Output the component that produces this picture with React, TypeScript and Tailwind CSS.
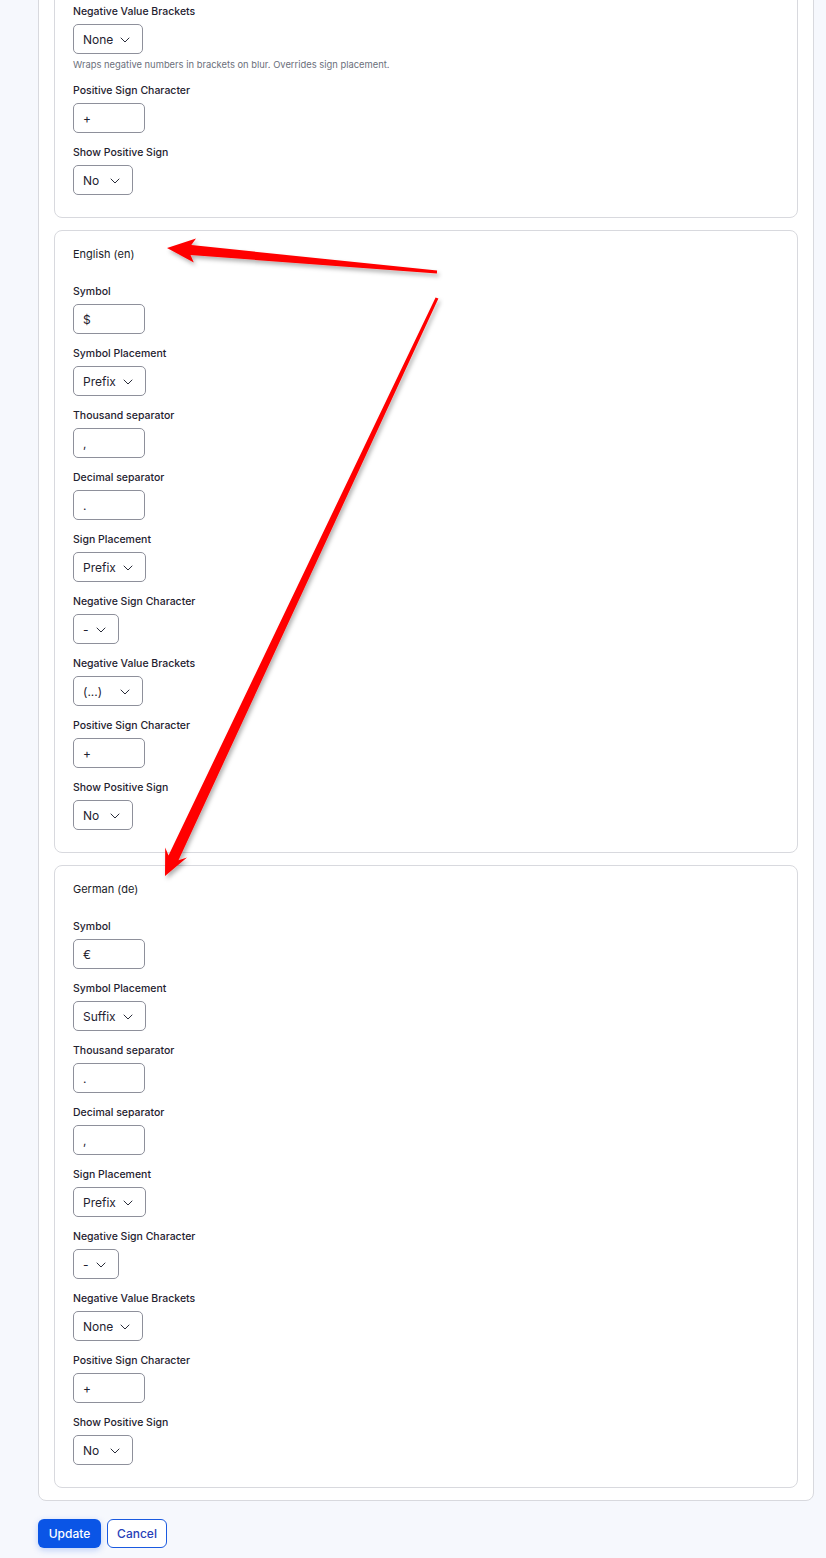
import React from 'react';

type Field =
  | { label: string; kind: 'input'; value: string; help?: string }
  | { label: string; kind: 'select'; value: string; width: string; help?: string };

const localeFields = (f: {
  symbol: string;
  placement: string;
  thousand: string;
  decimal: string;
  brackets: string;
  bracketsWidth: string;
}): Field[] => [
  { label: 'Symbol', kind: 'input', value: f.symbol },
  { label: 'Symbol Placement', kind: 'select', value: f.placement, width: 'w-[73px]' },
  { label: 'Thousand separator', kind: 'input', value: f.thousand },
  { label: 'Decimal separator', kind: 'input', value: f.decimal },
  { label: 'Sign Placement', kind: 'select', value: 'Prefix', width: 'w-[73px]' },
  { label: 'Negative Sign Character', kind: 'select', value: '-', width: 'w-[46px]' },
  { label: 'Negative Value Brackets', kind: 'select', value: f.brackets, width: f.bracketsWidth },
  { label: 'Positive Sign Character', kind: 'input', value: '+' },
  { label: 'Show Positive Sign', kind: 'select', value: 'No', width: 'w-[60px]' },
];

const defaultTail: Field[] = [
  {
    label: 'Negative Value Brackets',
    kind: 'select',
    value: 'None',
    width: 'w-[70px]',
    help: 'Wraps negative numbers in brackets on blur. Overrides sign placement.',
  },
  { label: 'Positive Sign Character', kind: 'input', value: '+' },
  { label: 'Show Positive Sign', kind: 'select', value: 'No', width: 'w-[60px]' },
];

const Chevron = () => (
  <svg width="10" height="6" viewBox="0 0 10 6" fill="none" className="shrink-0">
    <path d="M1 1l4 4 4-4" stroke="#2a2d3a" strokeWidth="1" strokeLinecap="round" strokeLinejoin="round" />
  </svg>
);

const FieldRow = ({ field }: { field: Field }) => (
  <div className="flex flex-col">
    <label className="pt-px text-[10.5px] leading-[14px] font-medium text-[#1f2230]">{field.label}</label>
    {field.kind === 'input' ? (
      <div className="mt-[5px] h-[30px] w-[72px] rounded-[5px] border border-[#8e909b] bg-white pl-[9px] pt-px flex items-center text-[12px] text-[#1f2230]">
        {field.value}
      </div>
    ) : (
      <div
        className={`mt-[5px] h-[30px] ${field.width} rounded-[5px] border border-[#8e909b] bg-white pl-[9px] pr-[12px] pt-px flex items-center justify-between text-[12px] text-[#1f2230]`}
      >
        <span>{field.value}</span>
        <Chevron />
      </div>
    )}
    {field.help && <p className="mt-[5px] text-[9.4px] leading-[12px] text-[#6b6f7b]">{field.help}</p>}
  </div>
);

const Card = ({ title, fields }: { title?: string; fields: Field[] }) => (
  <div className="rounded-[8px] border border-[#d8d9de] bg-white px-[18px] pt-4 pb-[22px]">
    {title && <div className="mb-[23px] text-[11px] leading-[14px] text-[#1a1c28]">{title}</div>}
    <div className="flex flex-col gap-3">
      {fields.map((f, i) => (
        <FieldRow key={i} field={f} />
      ))}
    </div>
  </div>
);

const Arrows = () => (
  <svg className="absolute top-0 left-0 pointer-events-none" width="826" height="1558" viewBox="0 0 826 1558">
    <defs>
      <filter id="shadow" x="-20%" y="-20%" width="140%" height="140%">
        <feDropShadow dx="2" dy="3" stdDeviation="2" floodColor="#000" floodOpacity="0.3" />
      </filter>
    </defs>
    <g fill="#ff0000" filter="url(#shadow)">
      <polygon points="167,248 196,238.5 191.3,245.1 437.1,270.5 436.9,273.5 190.5,255.1 193.8,262.4" />
      <polygon points="165,876 187,857.6 178.5,860.2 438.4,298.6 435.6,297.4 168.5,855.6 165.2,847.4" />
    </g>
  </svg>
);

export default function App() {
  return (
    <div className="relative min-h-[1558px] overflow-hidden bg-[#f6f8fd] font-['Inter','Noto_Sans',sans-serif]">
      <div className="-mt-[29px] ml-[38px] w-[776px] rounded-b-[8px] border border-[#d8d9de] bg-white px-[15px] pt-[15px] pb-3 flex flex-col gap-3">
        <Card fields={defaultTail} />
        <Card
          title="English (en)"
          fields={localeFields({
            symbol: '$',
            placement: 'Prefix',
            thousand: ',',
            decimal: '.',
            brackets: '(...)',
            bracketsWidth: 'w-[70px]',
          })}
        />
        <Card
          title="German (de)"
          fields={localeFields({
            symbol: '€',
            placement: 'Suffix',
            thousand: '.',
            decimal: ',',
            brackets: 'None',
            bracketsWidth: 'w-[70px]',
          })}
        />
      </div>
      <div className="ml-[38px] mt-[18px] flex gap-[6px]">
        <button className="h-[29px] w-[63px] rounded-[6px] bg-[#0a55e6] text-[12px] font-medium text-white shadow-[0_2px_6px_rgba(10,85,230,0.25)]">
          Update
        </button>
        <button className="h-[29px] w-[60px] rounded-[6px] border border-[#1a5ae0] bg-white text-[12px] font-medium text-[#2740b8]">
          Cancel
        </button>
      </div>
      <Arrows />
    </div>
  );
}
